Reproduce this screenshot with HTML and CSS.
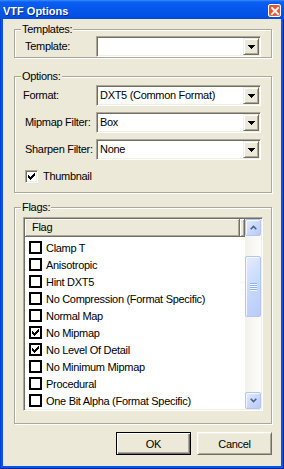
FILE: index.html
```html
<!DOCTYPE html>
<html>
<head>
<meta charset="utf-8">
<link rel="stylesheet" href="styles.css">
</head>
<body>
<div class="window">
  <div class="titlebar">
    <span class="title">VTF Options</span>
    <span class="close"><svg width="8" height="8" viewBox="0 0 8 8"><path d="M1 1L7 7M7 1L1 7" stroke="#fff" stroke-width="1.8" stroke-linecap="square"/></svg></span>
  </div>
  <div class="client">
    <div class="group g-tpl">
      <div class="legend">Templates:</div>
      <div class="gbody tpl-body">
        <div class="row">
          <span class="lbl">Template:</span>
          <div class="combo"><span class="val"></span><span class="drop"><svg width="7" height="4" viewBox="0 0 7 4"><path d="M0 0h7v1H0zM1 1h5v1H1zM2 2h3v1H2zM3 3h1v1H3z" fill="#000"/></svg></span></div>
        </div>
      </div>
    </div>

    <div class="group g-opt">
      <div class="legend">Options:</div>
      <div class="gbody opt-body">
        <div class="rows">
          <div class="row">
            <span class="lbl lbl-format">Format:</span>
            <div class="combo"><span class="val">DXT5 (Common Format)</span><span class="drop"><svg width="7" height="4" viewBox="0 0 7 4"><path d="M0 0h7v1H0zM1 1h5v1H1zM2 2h3v1H2zM3 3h1v1H3z" fill="#000"/></svg></span></div>
          </div>
          <div class="row">
            <span class="lbl">Mipmap Filter:</span>
            <div class="combo"><span class="val">Box</span><span class="drop"><svg width="7" height="4" viewBox="0 0 7 4"><path d="M0 0h7v1H0zM1 1h5v1H1zM2 2h3v1H2zM3 3h1v1H3z" fill="#000"/></svg></span></div>
          </div>
          <div class="row">
            <span class="lbl">Sharpen Filter:</span>
            <div class="combo"><span class="val">None</span><span class="drop"><svg width="7" height="4" viewBox="0 0 7 4"><path d="M0 0h7v1H0zM1 1h5v1H1zM2 2h3v1H2zM3 3h1v1H3z" fill="#000"/></svg></span></div>
          </div>
        </div>
        <div class="chk-row">
          <span class="cbox"><svg width="7" height="7" viewBox="0 0 7 7"><path d="M6 0h1v1H6zM5 1h2v1H5zM0 2h1v1H0zM4 2h3v1H4zM0 3h2v1H0zM3 3h3v1H3zM0 4h5v1H0zM1 5h3v1H1zM2 6h1v1H2z" fill="#000"/></svg></span>
          <span>Thumbnail</span>
        </div>
      </div>
    </div>

    <div class="group g-flags">
      <div class="legend">Flags:</div>
      <div class="gbody flags-body">
        <div class="listview">
          <div class="lv-main">
            <div class="lv-header">
              <div class="hcol">Flag</div>
              <div class="hrest"></div>
            </div>
            <ul class="lv-rows">
              <li><span class="lcb"></span>Clamp T</li>
              <li><span class="lcb"></span>Anisotropic</li>
              <li><span class="lcb"></span>Hint DXT5</li>
              <li><span class="lcb"></span>No Compression (Format Specific)</li>
              <li><span class="lcb"></span>Normal Map</li>
              <li><span class="lcb"><svg width="7" height="7" viewBox="0 0 7 7"><path d="M6 0h1v1H6zM5 1h2v1H5zM0 2h1v1H0zM4 2h3v1H4zM0 3h2v1H0zM3 3h3v1H3zM0 4h5v1H0zM1 5h3v1H1zM2 6h1v1H2z" fill="#000"/></svg></span>No Mipmap</li>
              <li><span class="lcb"><svg width="7" height="7" viewBox="0 0 7 7"><path d="M6 0h1v1H6zM5 1h2v1H5zM0 2h1v1H0zM4 2h3v1H4zM0 3h2v1H0zM3 3h3v1H3zM0 4h5v1H0zM1 5h3v1H1zM2 6h1v1H2z" fill="#000"/></svg></span>No Level Of Detail</li>
              <li><span class="lcb"></span>No Minimum Mipmap</li>
              <li><span class="lcb"></span>Procedural</li>
              <li><span class="lcb"></span>One Bit Alpha (Format Specific)</li>
            </ul>
          </div>
          <div class="sb">
            <div class="sb-btn"><svg width="7" height="5" viewBox="0 0 7 5"><path d="M0.7 4.2L3.5 1.4L6.3 4.2" stroke="#4d6185" stroke-width="1.6" fill="none"/></svg></div>
            <div class="sb-track">
              <div class="sb-thumb"><svg width="7" height="8" viewBox="0 0 7 8"><path d="M0 0h7v1H0zM0 2h7v1H0zM0 4h7v1H0zM0 6h7v1H0z" fill="#8cb0f8"/><path d="M0 1h7v1H0zM0 3h7v1H0zM0 5h7v1H0zM0 7h7v1H0z" fill="#f2f6ff"/></svg></div>
            </div>
            <div class="sb-btn"><svg width="7" height="5" viewBox="0 0 7 5"><path d="M0.7 0.8L3.5 3.6L6.3 0.8" stroke="#4d6185" stroke-width="1.6" fill="none"/></svg></div>
          </div>
        </div>
      </div>
    </div>

    <div class="buttons">
      <button class="btn btn-default">OK</button>
      <button class="btn">Cancel</button>
    </div>
  </div>
</div>
</body>
</html>
```

FILE: styles.css
```css
* { box-sizing: border-box; }

html, body {
  margin: 0;
  padding: 0;
  background: #0054e3;
}

body {
  font-family: "Liberation Sans", Arial, sans-serif;
  font-size: 11px;
  letter-spacing: -0.3px;
  color: #000;
}

.window {
  width: 284px;
  height: 469px;
  display: flex;
  flex-direction: column;
  background: #0756e8;
  box-shadow: inset 1px 0 #0a3fd0, inset -1px 0 #00239e, inset 0 -1px #00239e;
}

.titlebar {
  height: 19px;
  display: flex;
  align-items: flex-start;
  padding-left: 3px;
  background: linear-gradient(#3a8cff 0, #0a5ff2 2px, #0558ec 40%, #0452e6 80%, #034ad8 100%);
}

.title {
  font: bold 11px/15px "Liberation Sans", Arial, sans-serif;
  letter-spacing: 0;
  padding-top: 4px;
  color: #fff;
  text-shadow: 1px 1px #0a2a8a;
}

.close {
  margin: 4px 3px 0 auto;
  width: 13px;
  height: 13px;
  border: 1px solid #fff;
  border-radius: 2px;
  background: radial-gradient(circle at 45% 45%, #e86a45 0, #dd5530 55%, #f09070 100%);
  display: flex;
  align-items: center;
  justify-content: center;
}

.close svg { display: block; }

.client {
  flex: 1;
  margin: 0 3px 3px;
  background: #ece9d8;
  display: flex;
  flex-direction: column;
  padding: 0 9px 0 11px;
}

/* group boxes */
.group {
  display: flex;
  flex-direction: column;
  border: 1px solid #aca899;
  box-shadow: inset 1px 1px #fff, 1px 1px #fff;
}

.g-tpl { margin-top: 10px; }
.g-opt { margin-top: 18px; }
.g-flags { margin-top: 14px; }

.legend {
  align-self: flex-start;
  margin: -7px 0 0 6px;
  padding: 0 1px;
  line-height: 13px;
  background: #ece9d8;
}

.tpl-body { padding: 0 10px; }
.opt-body { padding: 2px 10px 9px; }
.flags-body { padding: 3px 8px 12px; }

.rows {
  display: flex;
  flex-direction: column;
  gap: 6px;
}

.row {
  display: flex;
  align-items: center;
  height: 21px;
}

.lbl {
  width: 71px;
  flex: none;
  line-height: 13px;
  white-space: nowrap;
}

.lbl-format { margin-left: -2px; width: 73px; }

/* combo box */
.combo {
  flex: 1;
  height: 21px;
  display: flex;
  background: #fff;
  border: 1px solid;
  border-color: #aca899 #fff #fff #aca899;
  box-shadow: inset 1px 1px #716f64, inset -1px -1px #f1efe2;
  padding: 1px;
}

.val {
  flex: 1;
  padding-left: 2px;
  line-height: 17px;
  white-space: nowrap;
}

.drop {
  width: 16px;
  height: 17px;
  background: #ece9d8;
  border: 1px solid;
  border-color: #f1efe2 #716f64 #716f64 #f1efe2;
  box-shadow: inset 1px 1px #fff, inset -1px -1px #aca899;
  display: flex;
  align-items: center;
  justify-content: center;
}

.drop svg, .cbox svg, .lcb svg, .sb svg { display: block; }

/* checkbox */
.chk-row {
  margin-top: 10px;
  height: 13px;
  display: flex;
  align-items: center;
  gap: 5px;
  line-height: 13px;
}

.cbox {
  width: 13px;
  height: 13px;
  background: #fff;
  border: 1px solid;
  border-color: #aca899 #fff #fff #aca899;
  box-shadow: inset 1px 1px #716f64, inset -1px -1px #f1efe2;
  display: flex;
  align-items: center;
  justify-content: center;
}

/* list view */
.listview {
  width: 240px;
  height: 194px;
  display: flex;
  background: #fff;
  border: 1px solid;
  border-color: #aca899 #fff #fff #aca899;
  box-shadow: inset 1px 1px #716f64, inset -1px -1px #f1efe2;
  padding: 1px;
}

.lv-main {
  flex: 1;
  display: flex;
  flex-direction: column;
  min-width: 0;
}

.lv-header {
  height: 18px;
  display: flex;
  flex: none;
}

.hcol, .hrest {
  background: #ece9d8;
  border-right: 1px solid #716f64;
  border-bottom: 1px solid #716f64;
  box-shadow: inset 1px 1px #fff, inset -1px -1px #aca899;
  line-height: 17px;
}

.hcol {
  width: 215px;
  padding-left: 7px;
}

.hrest { flex: 1; }

.lv-rows {
  list-style: none;
  margin: 0;
  padding: 2px 0 0;
}

.lv-rows li {
  height: 17px;
  display: flex;
  align-items: center;
  padding-left: 4px;
  gap: 4px;
  white-space: nowrap;
}

.lcb {
  width: 13px;
  height: 13px;
  flex: none;
  border: 2px solid #000;
  background: #fff;
  display: flex;
  align-items: center;
  justify-content: center;
}

/* scrollbar */
.sb {
  width: 16px;
  flex: none;
  display: flex;
  flex-direction: column;
  background: linear-gradient(to right, #f3f1ec, #fdfdfa);
}

.sb-btn, .sb-thumb {
  border: 1px solid #b2c6f3;
  border-radius: 2px;
  background: linear-gradient(135deg, #e4ecfd 0, #c9d9fc 50%, #b8ccf9 100%);
  box-shadow: inset 1px 1px #f4f7ff;
  display: flex;
  align-items: center;
  justify-content: center;
}

.sb-btn { height: 17px; flex: none; }

.sb-track {
  flex: 1;
  display: flex;
  flex-direction: column;
}

.sb-thumb {
  margin-top: 20px;
  height: 61px;
}

/* buttons */
.buttons {
  margin-top: 8px;
  display: flex;
  justify-content: flex-end;
  gap: 6px;
}

.btn {
  width: 75px;
  height: 23px;
  margin: 0;
  padding: 0;
  font: 11px "Liberation Sans", Arial, sans-serif;
  letter-spacing: -0.3px;
  color: #000;
  background: #ece9d8;
  border: 1px solid;
  border-color: #fff #716f64 #716f64 #fff;
  box-shadow: inset 1px 1px #f1efe2, inset -1px -1px #aca899;
}

.btn-default {
  border: 1px solid #000;
  box-shadow: inset 1px 1px #fff, inset -1px -1px #716f64, inset -2px -2px #aca899;
}
```
